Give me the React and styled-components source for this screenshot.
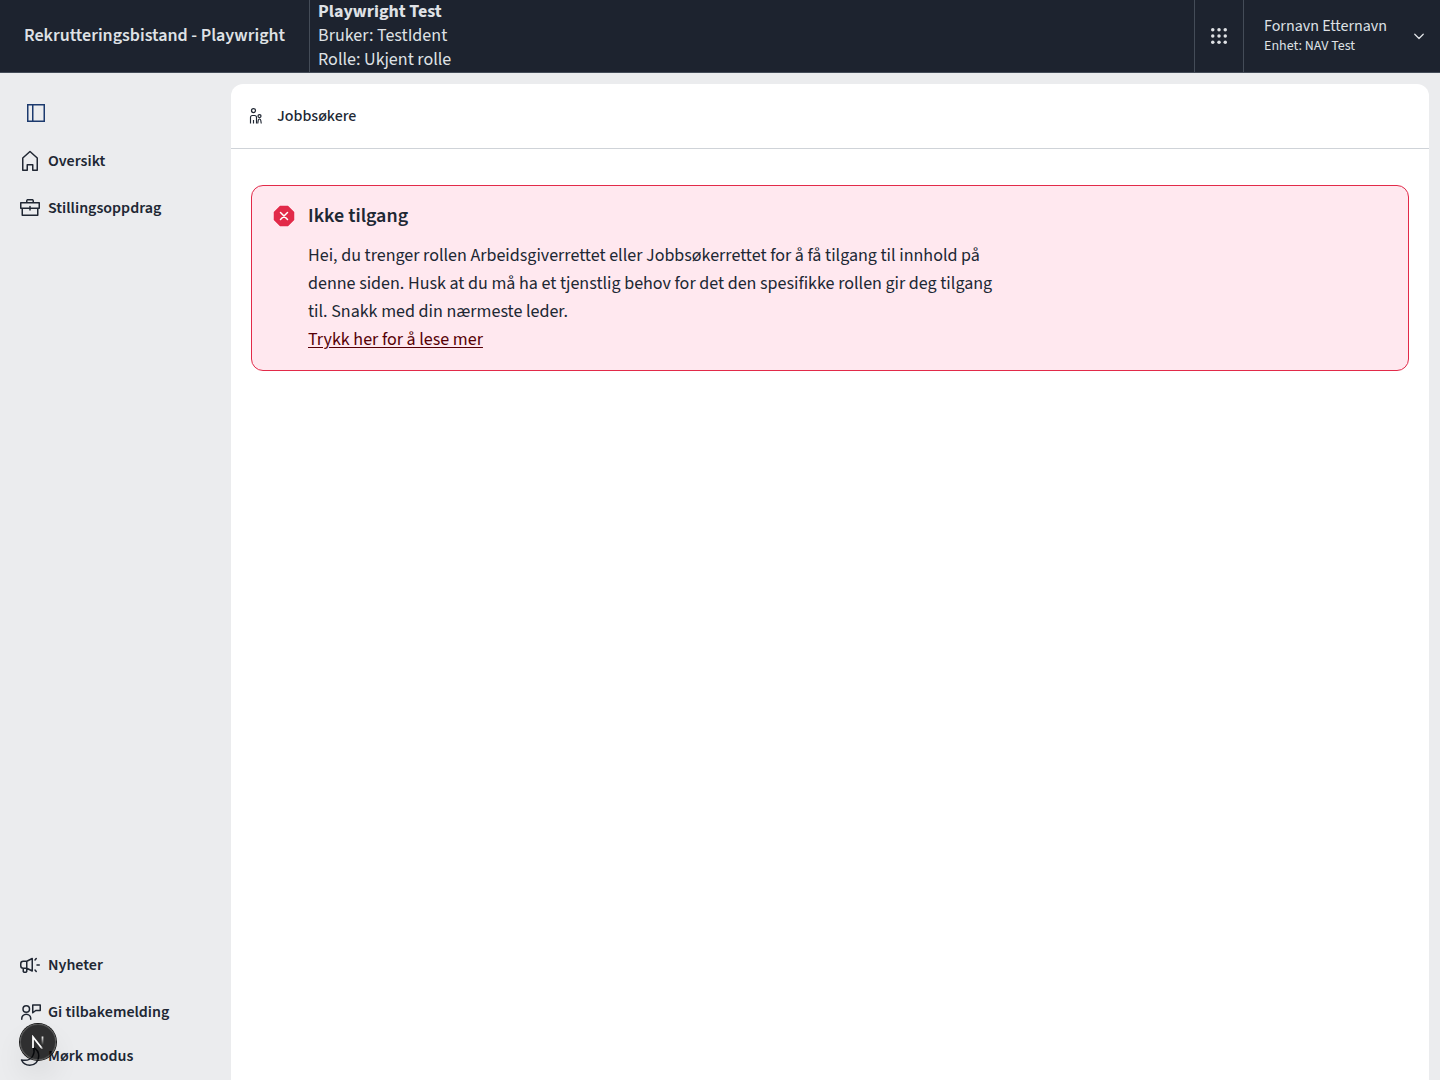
import React from "react";
import styled, { createGlobalStyle } from "styled-components";

const ink = "#202733";

const GlobalStyle = createGlobalStyle`
  *, *::before, *::after { box-sizing: border-box; }
  body {
    margin: 0;
    background: #ebecee;
    color: ${ink};
    font-family: "Source Sans 3", "Noto Sans CJK SC", "Open Sans", sans-serif;
    font-size: 18px;
    line-height: 24px;
  }
  button { font: inherit; color: inherit; background: none; border: 0; padding: 0; cursor: pointer; }
  h1, h2, p { margin: 0; }
`;

const Page = styled.div`
  min-height: 100vh;
  display: flex;
  flex-direction: column;
`;

const TopBar = styled.header`
  display: flex;
  flex: none;
  background: #1d232f;
  color: #dfe1e5;
  border-bottom: 1px solid #444c58;
`;

const AppTitle = styled.a`
  display: flex;
  align-items: center;
  padding: 0 24px;
  border-right: 1px solid #444c58;
  color: inherit;
  text-decoration: none;
  font-weight: 600;
`;

const Identity = styled.div`
  flex: 1;
  padding-left: 8px;
`;

const AppsButton = styled.button`
  display: grid;
  place-items: center;
  width: 50px;
  border: solid #444c58;
  border-width: 0 1px;
`;

const UserButton = styled.button`
  display: flex;
  align-items: center;
  gap: 16px;
  padding: 0 12px 0 20px;
  text-align: left;
`;

const UserText = styled.span`
  display: flex;
  flex-direction: column;
  width: 130px;
  font-size: 16px;
  line-height: 20px;
`;

const Unit = styled.span`
  font-size: 14px;
`;

const Body = styled.div`
  flex: 1;
  display: flex;
`;

const Sidebar = styled.nav`
  flex: none;
  display: flex;
  flex-direction: column;
  justify-content: space-between;
  width: 231px;
  padding: 27px 18px 12px;
`;

const NavGroup = styled.div`
  display: flex;
  flex-direction: column;
  align-items: flex-start;
  gap: ${(p) => p.$gap}px;
`;

const CollapseButton = styled.button`
  display: grid;
  place-items: center;
  width: 36px;
  height: 26px;
  && { color: #1c3a6e; }
`;

const navItem = `
  display: flex;
  align-items: center;
  gap: 6px;
  color: inherit;
  text-decoration: none;
  font-size: 16px;
  font-weight: 600;
  line-height: 24px;
`;

const NavLink = styled.a`${navItem}`;
const ThemeButton = styled.button`&& { ${navItem} }`;

const Panel = styled.main`
  flex: 1;
  min-width: 0;
  margin: 11px 11px 0 0;
  background: #fff;
  border-radius: 12px 12px 0 0;
`;

const PanelHeader = styled.header`
  display: flex;
  align-items: center;
  gap: 12px;
  height: 65px;
  padding: 0 16px;
  border-bottom: 1px solid #cfd3d8;
`;

const PageTitle = styled.h1`
  font-size: 16px;
  font-weight: 500;
  line-height: 24px;
`;

const PanelContent = styled.div`
  padding: 36px 20px;
`;

const Alert = styled.section`
  display: flex;
  align-items: flex-start;
  gap: 12px;
  padding: 16px 20px;
  border: 1px solid #e22a49;
  border-radius: 12px;
  background: #ffe8ef;

  > svg { margin-top: 2px; flex: none; }
`;

const AlertText = styled.div`
  display: flex;
  flex-direction: column;
  gap: 12px;
  max-width: 700px;
  line-height: 28px;
`;

const AlertTitle = styled.h2`
  font-size: 20px;
  font-weight: 600;
`;

const ReadMore = styled.a`
  color: #560006;
  text-decoration: underline;
  text-decoration-thickness: 1px;
  text-underline-offset: 2px;
`;

const DevBadge = styled.button`
  && {
    position: fixed;
    left: 20px;
    bottom: 20px;
    display: grid;
    place-items: center;
    width: 36px;
    height: 36px;
    border-radius: 50%;
    background: rgba(0, 0, 0, 0.8);
    box-shadow: 0 0 0 1px #171717, inset 0 0 0 1px rgba(255, 255, 255, 0.14),
      0 16px 32px -8px rgba(0, 0, 0, 0.24);
  }
`;

const Icon = ({ size = 24, children }) => (
  <svg width={size} height={size} viewBox="0 0 24 24" fill="none" stroke="currentColor"
    strokeWidth="1.5" strokeLinejoin="round" strokeLinecap="round" aria-hidden="true">
    {children}
  </svg>
);

const HouseIcon = () => (
  <Icon><path d="M12 2.5 4.75 9v12.25h4.5v-5.5h5.5v5.5h4.5V9z" /></Icon>
);

const BriefcaseIcon = () => (
  <Icon>
    <path d="M2.75 6.75h18.5v5.5H2.75zM4.25 12.25v7h15.5v-7M8.75 6.75v-2l.5-1h5.5l.5 1v2M12 10.5v3.5" />
  </Icon>
);

const MegaphoneIcon = () => (
  <Icon>
    <path d="M14.25 5.5V18l-5.5-2.75h-3.5a2.5 2.5 0 0 1-2.5-2.5v-2a2.5 2.5 0 0 1 2.5-2.5h3.5zM8.75 8.25v7M5.25 15.25v3.25l.75.75h2l.75-.75v-3.25M19 12h2.25M17 7l1.25-1.5M17 17l1.25 1.5" />
  </Icon>
);

const FeedbackIcon = () => (
  <Icon>
    <circle cx="8.25" cy="9" r="3.25" />
    <path d="M3.75 19.25v-.5a4.5 4.5 0 0 1 9 0v.5M14.75 5h7.5v5.5h-4.5l-3 2.25z" />
  </Icon>
);

const MoonIcon = () => (
  <Icon>
    <path d="M15.5 3.5c3.25 1.75 5.25 4.75 5.25 8.5 0 5.5-4 9.25-9 9.25-3.75 0-6.75-2-8.25-5.25 5.25 1 9.25-.5 11.25-4 1.5-2.75 1.75-5.5.75-8.5z" />
  </Icon>
);

const PanelIcon = () => (
  <Icon><path d="M3.75 3.75h16.5v16.5H3.75zM8.75 3.75v16.5" strokeLinejoin="miter" /></Icon>
);

const PeopleIcon = () => (
  <svg width="18" height="18" viewBox="0 0 18 18" fill="none" stroke="currentColor"
    strokeWidth="1.25" aria-hidden="true">
    <circle cx="6.5" cy="3.5" r="2" />
    <path d="M3.5 16.5v-6q0-2 2-2h2q2 0 2 2v6M6.5 13v3.5" strokeWidth="1.15" />
    <circle cx="12.5" cy="9" r="1.5" />
    <path d="m10.75 16.5.5-3.25q.25-1.25 1.25-1.25t1.25 1.25l.5 3.25" strokeWidth="1.15" />
  </svg>
);

const GridIcon = () => (
  <svg width="24" height="24" viewBox="0 0 24 24" fill="currentColor" aria-hidden="true">
    {[5.75, 12, 18.25].map((y) => [5.75, 12, 18.25].map((x) => (
      <circle key={`${x}-${y}`} cx={x} cy={y} r="1.75" />
    )))}
  </svg>
);

const ChevronIcon = () => (
  <svg width="18" height="18" viewBox="0 0 18 18" fill="none" stroke="currentColor"
    strokeWidth="1.25" strokeLinecap="round" strokeLinejoin="round" aria-hidden="true">
    <path d="m4.75 7.25 4.25 4.25 4.25-4.25" />
  </svg>
);

const ErrorIcon = () => (
  <svg width="24" height="24" viewBox="0 0 24 24" aria-hidden="true">
    <path d="M8 2h8l6 6v8l-6 6H8l-6-6V8z" fill="#e22a49" stroke="#e22a49" strokeWidth="0.5" strokeLinejoin="round" />
    <path d="m8.5 8.5 7 7m0-7-7 7" stroke="#fff" strokeWidth="1.5" strokeLinecap="round" />
  </svg>
);

const NextMark = () => (
  <svg width="14" height="14" viewBox="0 0 14 14" fill="none" aria-hidden="true">
    <defs>
      <linearGradient id="diag" x1="7" y1="7" x2="13" y2="14" gradientUnits="userSpaceOnUse">
        <stop stopColor="#fff" /><stop offset="0.6" stopColor="#fff" /><stop offset="1" stopColor="#fff" stopOpacity="0" />
      </linearGradient>
      <linearGradient id="stem" x1="11" y1="1" x2="11" y2="10" gradientUnits="userSpaceOnUse">
        <stop stopColor="#fff" /><stop offset="1" stopColor="#fff" stopOpacity="0" />
      </linearGradient>
    </defs>
    <path d="M2 13V2l9.5 12" stroke="url(#diag)" strokeWidth="1.75" />
    <path d="M11.5 1.5v9" stroke="url(#stem)" strokeWidth="1.75" />
  </svg>
);

export default function App() {
  return (
    <>
      <GlobalStyle />
      <Page>
        <TopBar>
          <AppTitle href="#">Rekrutteringsbistand - Playwright</AppTitle>
          <Identity>
            <strong>Playwright Test</strong>
            <div>Bruker: TestIdent</div>
            <div>Rolle: Ukjent rolle</div>
          </Identity>
          <AppsButton type="button" aria-label="Systemer"><GridIcon /></AppsButton>
          <UserButton type="button">
            <UserText>
              <span>Fornavn Etternavn</span>
              <Unit>Enhet: NAV Test</Unit>
            </UserText>
            <ChevronIcon />
          </UserButton>
        </TopBar>
        <Body>
          <Sidebar>
            <NavGroup $gap={23}>
              <CollapseButton type="button" aria-label="Skjul meny"><PanelIcon /></CollapseButton>
              <NavLink href="#"><HouseIcon />Oversikt</NavLink>
              <NavLink href="#"><BriefcaseIcon />Stillingsoppdrag</NavLink>
            </NavGroup>
            <NavGroup $gap={20}>
              <NavGroup $gap={23}>
                <NavLink href="#"><MegaphoneIcon />Nyheter</NavLink>
                <NavLink href="#"><FeedbackIcon />Gi tilbakemelding</NavLink>
              </NavGroup>
              <ThemeButton type="button"><MoonIcon />Mørk modus</ThemeButton>
            </NavGroup>
          </Sidebar>
          <Panel>
            <PanelHeader>
              <PeopleIcon />
              <PageTitle>Jobbsøkere</PageTitle>
            </PanelHeader>
            <PanelContent>
              <Alert>
                <ErrorIcon />
                <AlertText>
                  <AlertTitle>Ikke tilgang</AlertTitle>
                  <div>
                    <p>
                      Hei, du trenger rollen Arbeidsgiverrettet eller Jobbsøkerrettet for å få tilgang til
                      innhold på denne siden. Husk at du må ha et tjenstlig behov for det den spesifikke
                      rollen gir deg tilgang til. Snakk med din nærmeste leder.
                    </p>
                    <ReadMore href="#">Trykk her for å lese mer</ReadMore>
                  </div>
                </AlertText>
              </Alert>
            </PanelContent>
          </Panel>
        </Body>
      </Page>
      <DevBadge type="button" aria-label="Open Next.js Dev Tools"><NextMark /></DevBadge>
    </>
  );
}
